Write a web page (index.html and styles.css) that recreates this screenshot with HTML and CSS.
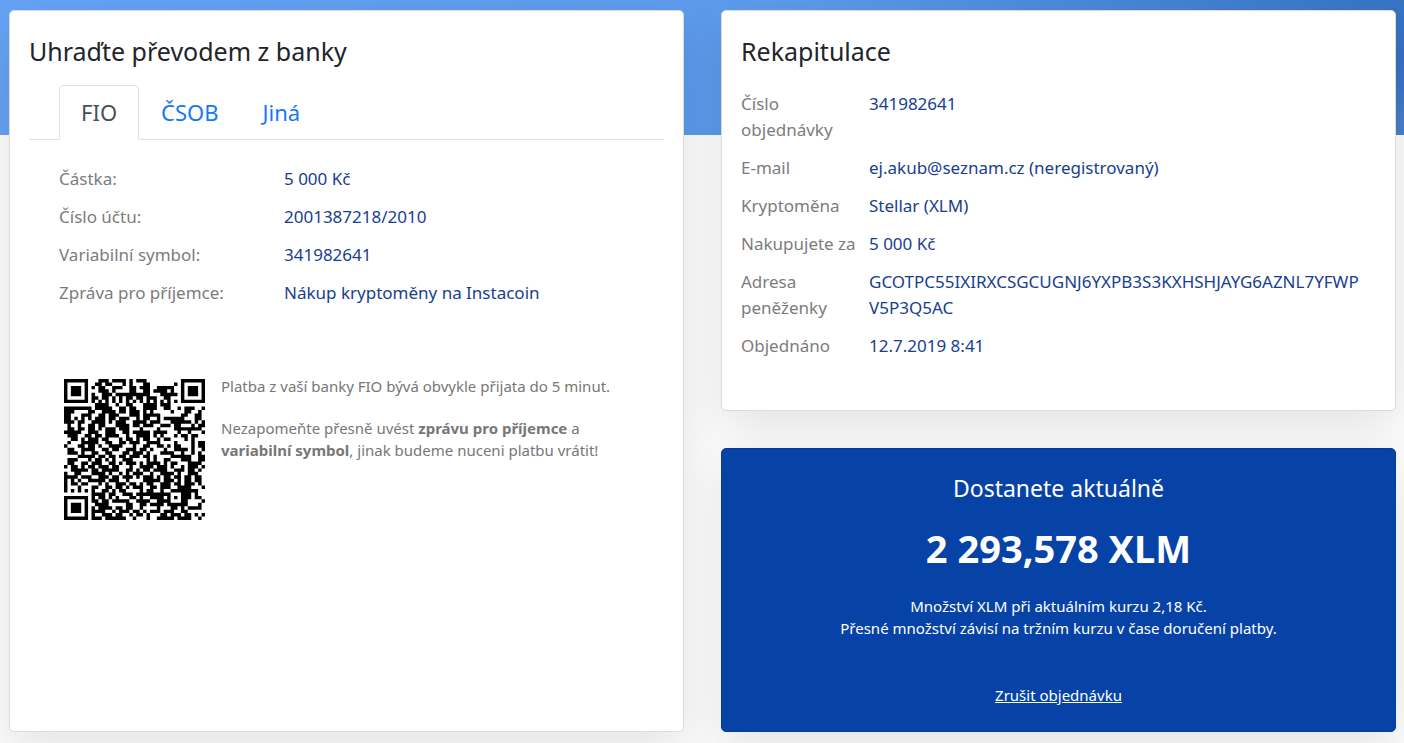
FILE: index.html
```html
<!DOCTYPE html>
<html lang="cs">
<head>
<meta charset="utf-8">
<meta name="viewport" content="width=device-width, initial-scale=1">
<title>Instacoin – platba</title>
<link rel="stylesheet" href="styles.css">
</head>
<body>
<main class="page">
  <section class="card payment">
    <h1 class="card-title">Uhraďte převodem z banky</h1>
    <nav class="tabs">
      <a class="tab active" href="#fio">FIO</a>
      <a class="tab" href="#csob">ČSOB</a>
      <a class="tab" href="#jina">Jiná</a>
    </nav>
    <div class="tab-content" id="fio">
      <dl class="details transfer">
        <dt>Částka:</dt><dd>5 000 Kč</dd>
        <dt>Číslo účtu:</dt><dd>2001387218/2010</dd>
        <dt>Variabilní symbol:</dt><dd>341982641</dd>
        <dt>Zpráva pro příjemce:</dt><dd>Nákup kryptoměny na Instacoin</dd>
      </dl>
      <div class="qr-row">
        <svg class="qr" viewBox="0 0 41 41" role="img" aria-label="QR platba"><path id="qr-modules"/></svg>
        <div class="note">
          <p>Platba z vaší banky FIO bývá obvykle přijata do 5 minut.</p>
          <p>Nezapomeňte přesně uvést <strong>zprávu pro příjemce</strong> a <strong>variabilní symbol</strong>, jinak budeme nuceni platbu vrátit!</p>
        </div>
      </div>
    </div>
  </section>
  <div class="side">
    <section class="card recap">
      <h2 class="card-title">Rekapitulace</h2>
      <dl class="details order">
        <dt>Číslo objednávky</dt><dd>341982641</dd>
        <dt>E-mail</dt><dd>ej.akub@seznam.cz (neregistrovaný)</dd>
        <dt>Kryptoměna</dt><dd>Stellar (XLM)</dd>
        <dt>Nakupujete za</dt><dd>5 000 Kč</dd>
        <dt>Adresa peněženky</dt><dd class="address">GCOTPC55IXIRXCSGCUGNJ6YXPB3S3KXHSHJAYG6AZNL7YFWP<wbr>V5P3Q5AC</dd>
        <dt>Objednáno</dt><dd>12.7.2019 8:41</dd>
      </dl>
    </section>
    <section class="card receive">
      <h2 class="receive-title">Dostanete aktuálně</h2>
      <p class="amount">2 293,578 XLM</p>
      <p class="rate">Množství XLM při aktuálním kurzu 2,18 Kč.<br>Přesné množství závisí na tržním kurzu v čase doručení platby.</p>
      <a class="cancel" href="#cancel">Zrušit objednávku</a>
    </section>
  </div>
</main>
<script src="qr.js"></script>
</body>
</html>
```
FILE: styles.css
```css
* {
  box-sizing: border-box;
}

body {
  margin: 0;
  background: linear-gradient(120deg, #65a3f5 0%, #5c9aeb 54%, #3672c2 97%, #4a82cc 100%) top / 100% 135px no-repeat #fcfcfc;
  color: #212529;
  font-family: "Noto Sans", sans-serif;
  font-size: 17px;
  line-height: 26px;
}

h1, h2, p, dl, dd {
  margin: 0;
}

.page {
  display: grid;
  grid-template-columns: 1fr 1fr;
  gap: 37px;
  min-height: 100vh;
  padding: 10px 8px 11px 9px;
}

.card {
  border: 1px solid #dcdcdc;
  border-radius: 5px;
  background: #fff;
  box-shadow: 0 16px 48px rgba(0, 0, 0, 0.1);
}

.payment, .recap {
  padding: 23px 19px;
}

.card-title {
  font-size: 25px;
  font-weight: 400;
  line-height: 34px;
}

.side {
  display: flex;
  flex-direction: column;
  gap: 37px;
}

.tabs {
  display: flex;
  margin-top: 17px;
  padding-left: 30px;
  border-bottom: 1px solid #dee2e6;
}

.tab {
  margin-bottom: -1px;
  padding: 10px 21px;
  border: 1px solid transparent;
  border-radius: 5px 5px 0 0;
  color: #1778f2;
  font-size: 22px;
  line-height: 33px;
  text-decoration: none;
}

.tab.active {
  border-color: #dee2e6 #dee2e6 #fff;
  background: #fff;
  color: #495057;
}

.tab-content {
  padding: 26px 30px 0;
}

.details {
  display: grid;
  row-gap: 12px;
}

.details dt {
  color: #7c7c7c;
}

.details dd {
  min-width: 0;
  color: #173e91;
}

.transfer {
  grid-template-columns: 225px 1fr;
}

.order {
  grid-template-columns: 118px 1fr;
  column-gap: 10px;
  margin-top: 23px;
}

.address {
  overflow-wrap: anywhere;
}

.qr-row {
  display: flex;
  gap: 16px;
  margin-top: 69px;
  padding-left: 5px;
}

.qr {
  flex: none;
  width: 141px;
  height: 141px;
  margin-top: 4px;
}

.note {
  color: #777;
  font-size: 15px;
  line-height: 22px;
}

.note p + p {
  margin-top: 20px;
}

.recap {
  min-height: 401px;
}

.receive {
  display: flex;
  flex: 1;
  flex-direction: column;
  align-items: center;
  padding: 22px 20px;
  border-color: #063d95;
  background: #0743a6;
  color: #fff;
  font-size: 15px;
  line-height: 22px;
  text-align: center;
}

.receive-title {
  font-size: 23px;
  font-weight: 400;
  line-height: 34px;
}

.amount {
  margin-top: 16px;
  font-size: 38px;
  font-weight: 700;
  line-height: 54px;
}

.rate {
  margin-top: 20px;
}

.cancel {
  margin-top: 45px;
  color: #fff;
}
```
FILE: qr.js
```js
// Placeholder module pattern: it looks like a QR code but does not encode a payment.
const rows = [
  "11111110001110111101011100000000001111111",
  "10000010011011000101000110000000101000001",
  "10111010101100111001101110011111001011101",
  "10111010001110100001100110111101001011101",
  "10111010100111011111111110001111101011101",
  "10000010110110101011011011100110001000001",
  "11111110101010101010101010101010101111111",
  "00000000011110010011000111101110000000000",
  "11111111011111001101100111100110010111001",
  "11100001100111101101110101000001000110010",
  "11000111001101110001110111110000001100110",
  "11010101011101101110010110010111111000110",
  "11101100111101011100111101110001111110101",
  "01001001101100011110110111001110110001011",
  "01101101101011101110001000010000111111110",
  "11111001110011100110111110111100010010001",
  "01110011011011110010011110101000101101100",
  "00110101110110001011010110010110000101000",
  "01000111110011001101110011110000100001011",
  "10001101101001111000100110011010110001011",
  "01100111100110110011101101000100111101001",
  "01110100110011000110111010001111001001010",
  "00001111101101101101110110100001111110011",
  "01110001011010100111000010100110001110011",
  "01100110111001101011101011110101100011110",
  "10110101101110110001001111011101001011101",
  "00111110110111110011010110111100111011010",
  "10011000111101001010111001001111010011100",
  "11110111001110110111010111010110110110110",
  "10101001111101110010000111110111010110110",
  "10110110001010011101101011001110110111010",
  "10001000110011011010111001101110011110001",
  "10101010100110101100001011001001111111100",
  "00000000111101100111011111111110001110100",
  "11111110101101010001101001111010101110110",
  "10000010110110111110011110011110001100001",
  "10111010011110000011001101111011111100010",
  "10111010101111011011001000010001101011110",
  "10111010111100101110110101110111001100000",
  "10000010100111011001011010001101110110101",
  "11111110111011111100100010011111011110010"
];

const path = rows.map((row, y) =>
  Array.from(row.matchAll(/1+/g), run => `M${run.index} ${y}h${run[0].length}v1h-${run[0].length}z`).join("")
).join("");

document.getElementById("qr-modules").setAttribute("d", path);
```
